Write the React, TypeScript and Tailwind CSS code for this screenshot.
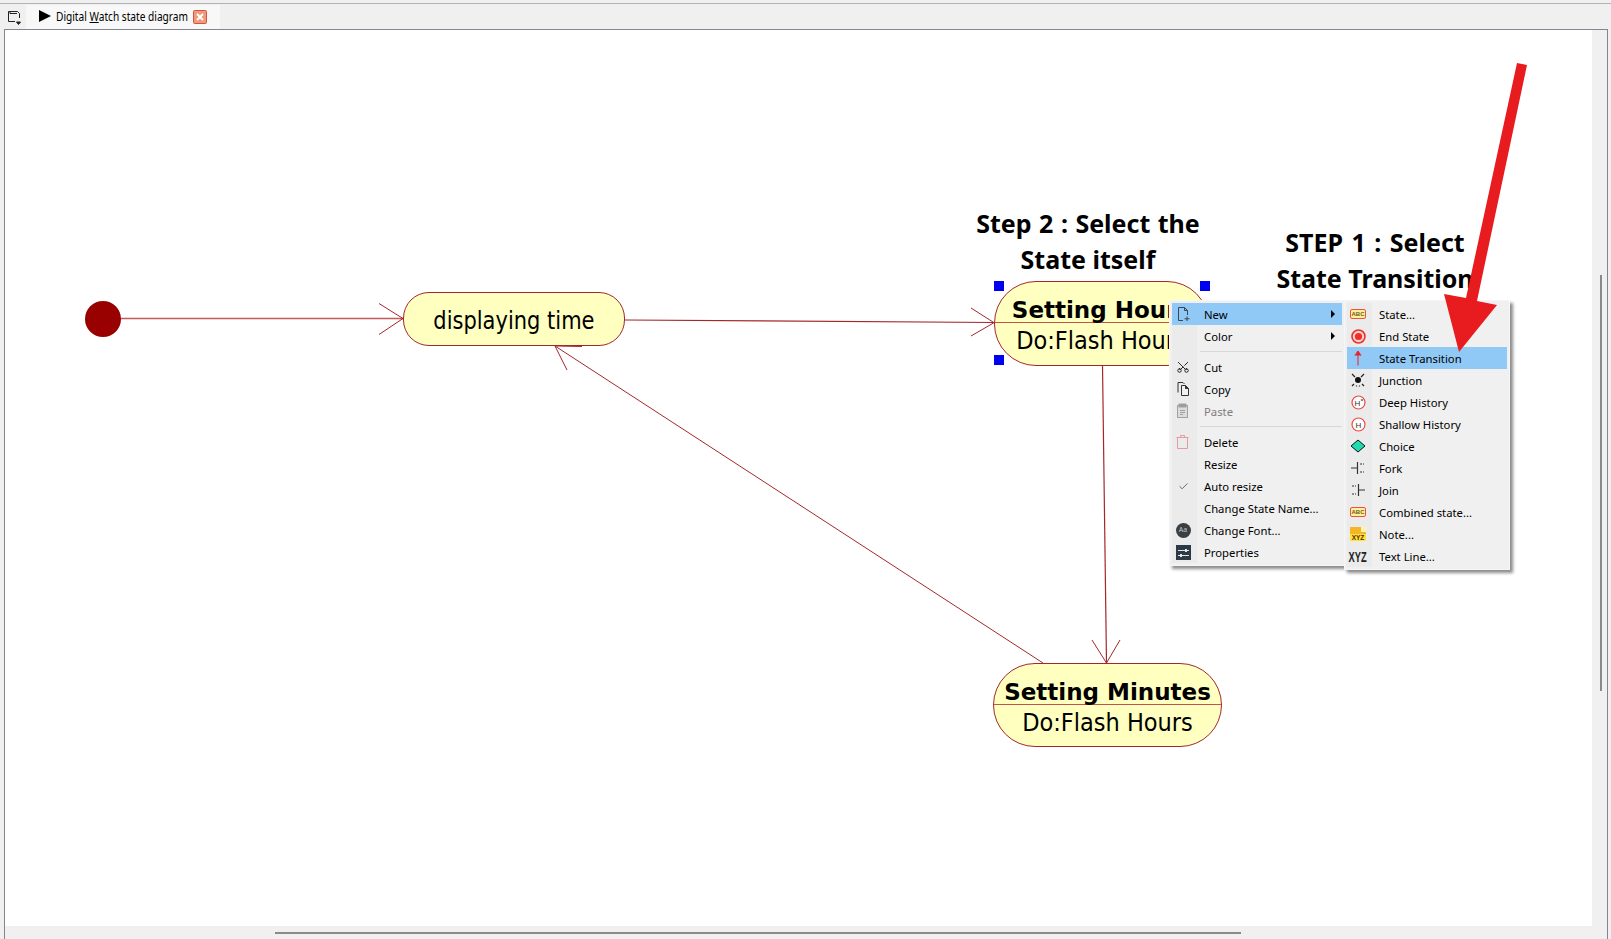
import type { ReactNode } from 'react';
import { Scissors, Check } from 'lucide-react';

const EDGE = '#a3282c';

function Doc() {
  return (
    <svg width="16" height="16" viewBox="0 0 16 16" fill="none" stroke="#3c4650" strokeWidth="1">
      <path d="M3.5 14.5V1.5H9.5L12.5 4.5V9M9.5 1.5V4.5H12.5M3.5 14.5H8" />
      <path d="M12 10.5V15M9.5 12.8H14.5" />
    </svg>
  );
}

function CopyIcon() {
  return (
    <svg width="16" height="16" viewBox="0 0 16 16" fill="none" stroke="#2e3338" strokeWidth="1">
      <path d="M3 11.5V1.5H8L9.5 3" />
      <path d="M6.5 14.5V4.5H10.5L13.5 7.5V14.5Z" fill="#f0f0f0" />
      <path d="M10.5 4.5V7.5H13.5" fill="#2e3338" />
    </svg>
  );
}

function PasteIcon() {
  return (
    <svg width="16" height="16" viewBox="0 0 16 16" fill="none" stroke="#a2a2a2" strokeWidth="1">
      <rect x="2.5" y="2.5" width="10" height="12" fill="#dcdcdc" />
      <rect x="4" y="1" width="7" height="3" fill="#9a9a9a" />
      <path d="M5 7.5H10M5 9.5H10M5 11.5H8" />
    </svg>
  );
}

function TrashIcon() {
  return (
    <svg width="16" height="16" viewBox="0 0 16 16" fill="none" stroke="#e39aa0" strokeWidth="1">
      <path d="M1.5 3.5H13.5M5.5 3.5V1.5H9.5V3.5M2.5 3.5V14.5H12.5V3.5" />
    </svg>
  );
}

function FontIcon() {
  return (
    <div className="flex h-[15px] w-[15px] items-center justify-center rounded-full bg-[#3a3f44] text-[7px] text-[#c8c8c8]">
      Aa
    </div>
  );
}

function PropsIcon() {
  return (
    <svg width="15" height="15" viewBox="0 0 15 15">
      <rect width="15" height="15" fill="#2d3a45" />
      <path d="M2 5.5H13M2 10.5H13" stroke="#dfe6ea" strokeWidth="1" />
      <rect x="9" y="4" width="2" height="3" fill="#dfe6ea" />
      <rect x="4" y="9" width="2" height="3" fill="#dfe6ea" />
    </svg>
  );
}

function AbcIcon() {
  return (
    <div className="flex h-[10px] w-[16px] items-center justify-center rounded-[2px] border border-[#f0503c] bg-[#fdf09a] font-['Liberation_Sans',sans-serif] text-[6px] font-bold leading-none text-[#6b5a20]">
      ABC
    </div>
  );
}

function EndStateIcon() {
  return (
    <svg width="15" height="15" viewBox="0 0 15 15">
      <circle cx="7.5" cy="7.5" r="6.5" fill="#fbd0cc" stroke="#ee2f2a" strokeWidth="1.6" />
      <circle cx="7.5" cy="7.5" r="3.6" fill="#ee2f2a" />
    </svg>
  );
}

function UpArrowIcon() {
  return (
    <svg width="12" height="16" viewBox="0 0 12 16" fill="none" stroke="#e8232a" strokeWidth="1.5">
      <path d="M6 15.5V2M3 5.5L6 1L9 5.5" fill="#e8232a" strokeWidth="1" />
    </svg>
  );
}

function JunctionIcon() {
  return (
    <svg width="14" height="14" viewBox="0 0 14 14" stroke="#222" strokeWidth="1.2">
      <circle cx="7" cy="7" r="3" fill="#111" stroke="none" />
      <path d="M1 1L4 4M13 1L10 4M1 13L3 11M13 13L11 11M5.5 13.5V12.5M8.5 13.5V12.5" />
    </svg>
  );
}

function HistoryIcon({ deep }: { deep?: boolean }) {
  return (
    <svg width="15" height="15" viewBox="0 0 15 15">
      <circle cx="7.5" cy="7.5" r="6.5" fill="#fff" stroke="#ee4a44" strokeWidth="1.2" />
      <text x={deep ? 6.4 : 7.5} y="10.5" textAnchor="middle" fontSize="8" fill="#333" fontFamily="Liberation Sans">
        H
      </text>
      {deep && (
        <text x="11" y="8" textAnchor="middle" fontSize="6" fontWeight="700" fill="#333" fontFamily="Liberation Sans">
          *
        </text>
      )}
    </svg>
  );
}

function ChoiceIcon() {
  return (
    <svg width="16" height="14" viewBox="0 0 16 14">
      <path d="M8 1L15 7L8 13L1 7Z" fill="#1fdcae" stroke="#111" strokeWidth="1" />
    </svg>
  );
}

function ForkIcon() {
  return (
    <svg width="16" height="16" viewBox="0 0 16 16" fill="none" stroke="#333" strokeWidth="1.2">
      <path d="M1 8H7M7.5 2V14" />
      <path d="M10 4H14M10 12H14" strokeDasharray="2 1" />
    </svg>
  );
}

function JoinIcon() {
  return (
    <svg width="16" height="16" viewBox="0 0 16 16" fill="none" stroke="#333" strokeWidth="1.2">
      <path d="M15 8H9M8.5 2V14" />
      <path d="M2 4H6M2 12H6" strokeDasharray="2 1" />
    </svg>
  );
}

function NoteIcon() {
  return (
    <div className="relative h-[14px] w-[16px] overflow-hidden bg-[#f5b625]">
      <div className="absolute right-0 top-0 h-[5px] w-[5px] bg-[#fff3b0]" />
      <div className="absolute inset-x-0 bottom-0 h-[7px] bg-[#ffe23a] text-center font-['Liberation_Sans',sans-serif] text-[6.5px] font-bold leading-[7px] text-[#5b2a00]">
        XYZ
      </div>
    </div>
  );
}

function XyzIcon() {
  return <div className="font-['Liberation_Sans',sans-serif] text-[15px] font-bold leading-none text-[#222] [transform:scaleX(0.62)]">XYZ</div>;
}

type Row = { label: string; icon?: ReactNode; arrow?: boolean; active?: boolean; muted?: boolean };

function MenuRow({ row, gutter }: { row: Row; gutter: string }) {
  return (
    <div className={`flex h-[22px] items-center ${row.active ? 'bg-[#90c8f6]' : ''}`}>
      <div className={`flex h-full w-[25px] shrink-0 items-center justify-center pr-[3px] ${gutter}`}>{row.icon}</div>
      <div className={`ml-[7px] flex-1 whitespace-nowrap pt-[2px] ${row.muted ? 'text-[#7d7d7d]' : 'text-black'}`}>{row.label}</div>
      {row.arrow && <div className="mr-[7px] h-0 w-0 border-y-[4px] border-l-[4px] border-y-transparent border-l-black" />}
    </div>
  );
}

function MenuSep() {
  return (
    <div className="flex h-[9px] items-start">
      <div className="h-full w-[25px] shrink-0 bg-[#ebebeb]" />
      <div className="ml-[3px] mt-[4px] h-[1px] flex-1 bg-[#d8d8d8]" />
    </div>
  );
}

const mainTop: Row[] = [
  { label: 'New', icon: <Doc />, arrow: true, active: true },
  { label: 'Color', arrow: true },
];
const mainMid: Row[] = [
  { label: 'Cut', icon: <Scissors size={14} strokeWidth={1.5} color="#111" className="-rotate-90" /> },
  { label: 'Copy', icon: <CopyIcon /> },
  { label: 'Paste', icon: <PasteIcon />, muted: true },
];
const mainEnd: Row[] = [
  { label: 'Delete', icon: <TrashIcon /> },
  { label: 'Resize' },
  { label: 'Auto resize', icon: <Check size={11} strokeWidth={1.5} color="#333" /> },
  { label: 'Change State Name...' },
  { label: 'Change Font...', icon: <FontIcon /> },
  { label: 'Properties', icon: <PropsIcon /> },
];
const subRows: Row[] = [
  { label: 'State...', icon: <AbcIcon /> },
  { label: 'End State', icon: <EndStateIcon /> },
  { label: 'State Transition', icon: <UpArrowIcon />, active: true },
  { label: 'Junction', icon: <JunctionIcon /> },
  { label: 'Deep History', icon: <HistoryIcon deep /> },
  { label: 'Shallow History', icon: <HistoryIcon /> },
  { label: 'Choice', icon: <ChoiceIcon /> },
  { label: 'Fork', icon: <ForkIcon /> },
  { label: 'Join', icon: <JoinIcon /> },
  { label: 'Combined state...', icon: <AbcIcon /> },
  { label: 'Note...', icon: <NoteIcon /> },
  { label: 'Text Line...', icon: <XyzIcon /> },
];

function ContextMenus() {
  const menuText = "border border-[#f6f6f6] bg-[#f0f0f0] p-[2px] font-['Noto_Sans',sans-serif] text-[11.3px] shadow-[3px_3px_3px_rgba(0,0,0,0.45)]";
  return (
    <>
      <div className={`absolute left-[1169px] top-[300px] w-[176px] ${menuText}`}>
        {mainTop.map((r) => <MenuRow key={r.label} row={r} gutter={r.active ? '' : 'bg-[#ebebeb]'} />)}
        <MenuSep />
        {mainMid.map((r) => <MenuRow key={r.label} row={r} gutter="bg-[#ebebeb]" />)}
        <MenuSep />
        {mainEnd.map((r) => <MenuRow key={r.label} row={r} gutter="bg-[#ebebeb]" />)}
      </div>
      <div className={`absolute left-[1344px] top-[300px] w-[166px] ${menuText}`}>
        {subRows.map((r) => <MenuRow key={r.label} row={r} gutter={r.active ? '' : 'bg-[#ebebeb]'} />)}
      </div>
    </>
  );
}

function Edges() {
  return (
    <svg className="absolute inset-0" width="1611" height="939" fill="none" stroke={EDGE} strokeWidth="1">
      <path d="M121 318.5H403" strokeWidth="1.4" stroke="#c25a5e" />
      <path d="M379 303.5L403 318.5L379 334.5" />
      <path d="M625 320L994 322.5" strokeWidth="1.2" />
      <path d="M971 308L994 322.7L971 336" />
      <path d="M1102.5 365L1106.5 663" strokeWidth="1.2" />
      <path d="M1092 640L1106.5 663L1120 640" />
      <path d="M1043 663L555 346" />
      <path d="M567 370L555 346L582 346.5" />
    </svg>
  );
}

function Handle({ className }: { className: string }) {
  return <div className={`absolute h-[10px] w-[10px] bg-[#0000f0] ${className}`} />;
}

function StepLabel({ className, lines, spacing }: { className: string; lines: string[]; spacing: string }) {
  return (
    <div className={`absolute -translate-x-1/2 whitespace-nowrap text-center font-['Noto_Sans',sans-serif] text-[25px] font-bold leading-[36px] text-black ${className}`}>
      <div className={spacing}>{lines[0]}</div>
      <div>{lines[1]}</div>
    </div>
  );
}

function ActionState({ className, title, action }: { className: string; title: string; action: string }) {
  return (
    <div className={`absolute overflow-hidden rounded-[42px] border border-[#a3282c] bg-[#ffffc0] text-center font-['DejaVu_Sans',sans-serif] text-black ${className}`}>
      <div className="flex h-[41px] items-end justify-center whitespace-nowrap border-b border-[#c0544f] text-[23px] font-bold leading-[24px]">{title}</div>
      <div className="whitespace-nowrap text-[25px] leading-[36px] [transform:scaleX(0.9)]">{action}</div>
    </div>
  );
}

function Diagram() {
  return (
    <div className="absolute inset-0">
      <Edges />
      <div className="absolute left-[85px] top-[301px] h-[36px] w-[36px] rounded-full bg-[#990000]" />
      <div className="absolute left-[403px] top-[292px] flex h-[54px] w-[222px] items-center justify-center whitespace-nowrap rounded-[26px] border border-[#a3282c] bg-[#ffffc0] pt-[4px] font-['DejaVu_Sans',sans-serif] text-[25px] text-black">
        <span className="[transform:scaleX(0.84)]">displaying time</span>
      </div>
      <ActionState className="left-[994px] top-[281px] h-[85px] w-[215px]" title="Setting Hours" action="Do:Flash Hours" />
      <ActionState className="left-[993px] top-[663px] h-[84px] w-[229px]" title="Setting Minutes" action="Do:Flash Hours" />
      <Handle className="left-[994px] top-[281px]" />
      <Handle className="left-[1200px] top-[281px]" />
      <Handle className="left-[994px] top-[355px]" />
      <StepLabel className="left-[1088px] top-[205px]" lines={['Step 2 : Select the', 'State itself']} spacing="[word-spacing:1px]" />
      <StepLabel className="left-[1375px] top-[224px]" lines={['STEP 1 : Select', 'State Transition']} spacing="[word-spacing:2px]" />
      <ContextMenus />
      <svg className="absolute inset-0" width="1611" height="939">
        <polygon points="1517,63 1527,65 1477,301 1497,305 1459,352 1444,294 1466,298" fill="#e81c1f" />
      </svg>
    </div>
  );
}

function TabBar() {
  return (
    <div className="flex h-[25px] shrink-0 items-end pl-[4px]">
      <div className="flex h-[24px] w-[22px] items-center justify-center pr-[2px]">
        <svg width="15" height="15" viewBox="0 0 15 15" fill="none" stroke="#222" strokeWidth="1">
          <path d="M1.5 11.5V1.5H10.5L12.5 3.5V8M1.5 11.5H8" />
          <path d="M3 1.5V3.5H10" />
          <path d="M9.5 12L13.5 12L11.5 14.5Z" fill="#222" />
        </svg>
      </div>
      <div className="flex h-[24px] w-[194px] items-center bg-[#f8f8f8] font-['Noto_Sans',sans-serif] text-[12px] text-black">
        <div className="ml-[13px] mt-[-3px] h-0 w-0 shrink-0 border-y-[6px] border-l-[12px] border-y-transparent border-l-black" />
        <div className="ml-[5px] w-[132px] shrink-0 whitespace-nowrap">
          <span className="inline-block origin-left [transform:scaleX(0.845)]">
            Digital <span className="underline">W</span>atch state diagram
          </span>
        </div>
        <div className="ml-[5px] shrink-0">
          <svg width="14" height="14" viewBox="0 0 14 14">
            <rect x="0.5" y="0.5" width="13" height="13" rx="1" fill="#ee9a7c" stroke="#d9533a" />
            <path d="M4 4L10 10M10 4L4 10" stroke="#fff" strokeWidth="2" />
          </svg>
        </div>
      </div>
    </div>
  );
}

export default function App() {
  return (
    <div className="relative h-[939px] w-[1611px] overflow-hidden bg-[#f0f0f0]">
      <div className="flex h-full flex-col pl-[4px] pr-[3px] pt-[3px]">
        <div className="-ml-[4px] -mr-[3px] border-t border-[#b4b4b4]">
          <TabBar />
        </div>
        <div className="flex min-h-0 flex-1 flex-col border-x border-t border-[#85858f]">
          <div className="flex min-h-0 flex-1">
            <div className="flex-1 bg-white" />
            <div className="w-[15px] bg-[#f0f0f0] pl-[8px] pt-[245px]">
              <div className="h-[416px] w-[2px] bg-[#8a8a8a]" />
            </div>
          </div>
          <div className="h-[13px] bg-[#f0f0f0] pl-[270px] pt-[6px]">
            <div className="h-[2px] w-[966px] bg-[#8a8a8a]" />
          </div>
        </div>
      </div>
      <Diagram />
    </div>
  );
}
